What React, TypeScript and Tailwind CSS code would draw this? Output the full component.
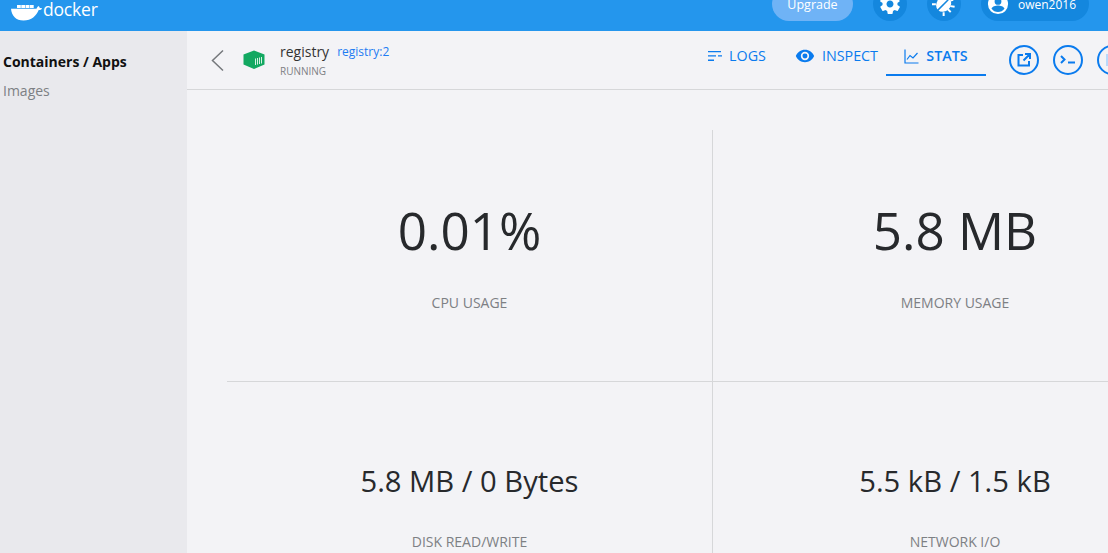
const stats = [
  { value: "0.01%", label: "CPU USAGE", big: true },
  { value: "5.8 MB", label: "MEMORY USAGE", big: true },
  { value: "5.8 MB / 0 Bytes", label: "DISK READ/WRITE", big: false },
  { value: "5.5 kB / 1.5 kB", label: "NETWORK I/O", big: false },
];

function DockerLogo() {
  return (
    <svg width="31" height="16" viewBox="0 0 31 16" fill="#fff">
      <path d="M6 0h3.800v3H6zM10.300 0h3.800v3h-3.800zM14.600 0h3.800v3h-3.800zM18.900 0h3.800v3h-3.800z" />
      <path d="M0 3.800h25.500c.3-1.100 1.200-2.300 2-2.800.8.500 1.300 1.300 1.400 2.200.7-.2 1.500-.1 2.100.3-.6 1.100-1.800 1.500-3.300 1.500C25.500 10.800 20.500 15.500 12.500 15.500 5 15.500.6 11 0 3.800z" />
    </svg>
  );
}

function TopCircle({ children }: { children: React.ReactNode }) {
  return <div className="flex h-[34px] w-[34px] items-center justify-center rounded-full bg-[#1487de]">{children}</div>;
}

function Header() {
  return (
    <header className="flex h-[31px] shrink-0 items-end overflow-hidden bg-[#2496ed] pb-[10px] text-white">
      <div className="ml-[11px] flex items-end">
        <DockerLogo />
        <span className="mb-[1px] ml-[1px] text-[17.500px] leading-[21px] tracking-[-0.2px]">docker</span>
      </div>
      <div className="ml-auto flex items-center">
        <div className="flex h-[34px] w-[81px] items-center justify-center rounded-full bg-[#6fb3f6] pt-[2px] text-[12.500px]">Upgrade</div>
        <div className="ml-[20px]">
          <TopCircle>
            <svg width="24" height="24" viewBox="0 0 24 24" fill="#fff">
              <path d="M19.400 13c.1-.3.100-.7.100-1s0-.7-.1-1l2.100-1.600c.2-.2.200-.4.100-.6l-2-3.500c-.1-.2-.4-.3-.6-.2l-2.500 1c-.5-.4-1.100-.7-1.700-1l-.4-2.600c0-.3-.2-.5-.5-.5h-4c-.3 0-.5.200-.5.500l-.4 2.600c-.6.300-1.200.6-1.700 1l-2.500-1c-.2-.1-.5 0-.6.200l-2 3.500c-.1.200-.1.400.1.600L4.600 11c-.1.300-.1.700-.1 1s0 .7.100 1l-2.100 1.600c-.2.200-.2.400-.1.600l2 3.500c.1.200.4.300.6.200l2.500-1c.5.400 1.100.7 1.700 1l.4 2.600c0 .3.200.5.500.5h4c.3 0 .5-.2.500-.5l.4-2.600c.6-.3 1.200-.6 1.700-1l2.500 1c.2.100.5 0 .6-.2l2-3.500c.1-.2.100-.4-.1-.6L19.400 13zM12 15.500c-1.900 0-3.500-1.600-3.500-3.500s1.600-3.500 3.500-3.500 3.500 1.600 3.500 3.500-1.600 3.500-3.500 3.500z" />
            </svg>
          </TopCircle>
        </div>
        <div className="ml-[20px]">
          <TopCircle>
            <svg width="24" height="24" viewBox="0 0 24 24" fill="#fff">
              <g transform="rotate(45 12 12)">
                <ellipse cx="12" cy="12.500" rx="7" ry="8" />
                <path d="M6 9L2.500 6.500M18 9l3.500-2.500M5.500 13H1.500M18.500 13h4M6.500 18l-3 3M17.500 18l3 3M10 5L8.500 2.500M14 5l1.500-2.500" stroke="#fff" strokeWidth="2" fill="none" />
                <path d="M12 6v15" stroke="#1487de" strokeWidth="1.500" />
              </g>
            </svg>
          </TopCircle>
        </div>
        <div className="ml-[20px] mr-[19px] flex h-[34px] w-[108px] items-center rounded-full bg-[#1487de] pl-[6px]">
          <svg width="22" height="22" viewBox="0 0 24 24" fill="#fff">
            <path d="M12 1a11 11 0 100 22 11 11 0 000-22zm0 4.500a3.700 3.700 0 110 7.400 3.700 3.700 0 010-7.400zm0 15.300c-2.900 0-5.500-1.400-7-3.600 0-2.300 4.700-3.600 7-3.600s7 1.300 7 3.600c-1.500 2.200-4.100 3.600-7 3.600z" />
          </svg>
          <span className="ml-[9px] pt-[2px] text-[12px]">owen2016</span>
        </div>
      </div>
    </header>
  );
}

function Sidebar() {
  return (
    <aside className="w-[187px] shrink-0 bg-[#e9e9ed] pl-[3px] pt-[20px] text-[14px]">
      <div className="font-bold leading-[22px] text-[#111]">Containers / Apps</div>
      <div className="mt-[7px] leading-[22px] text-[#7d8084]">Images</div>
    </aside>
  );
}

function Tab({ icon, label, active }: { icon: React.ReactNode; label: string; active?: boolean }) {
  return (
    <div className={`flex h-[38px] items-center justify-center gap-[7px] border-b-2 text-[14.300px] text-[#0a7bee] ${active ? "border-[#0a7bee] font-semibold" : "border-transparent font-medium"}`}>
      {icon}
      <span>{label}</span>
    </div>
  );
}

function RoundAction({ children }: { children: React.ReactNode }) {
  return <div className="flex h-[30px] w-[30px] shrink-0 items-center justify-center rounded-full border-2 border-[#0a7bee]">{children}</div>;
}

function SubHeader() {
  return (
    <div className="flex h-[59px] shrink-0 items-start overflow-hidden border-b border-[#d6d7d9]">
      <svg className="ml-[23px] mt-[17px] shrink-0" width="16" height="24" viewBox="0 0 16 24" fill="none" stroke="#75787c" strokeWidth="1.500">
        <path d="M13 2.500L2.500 12.500 13 22.500" />
      </svg>
      <svg className="ml-[17px] mt-[19px] shrink-0" width="22" height="20" viewBox="0 0 22 20">
        <path d="M11 0.500L21.500 4.500V14.500L11 19 .5 14.500V4.500z" fill="#12a861" />
        <path d="M12 8.500h1v6.500h-1zM14 8h1v6.500h-1zM16 7.500h1v6.500h-1zM18 7h1v6.500h-1z" fill="#d5f0e2" />
      </svg>
      <div className="ml-[15px] mt-[10px] w-[110px] shrink-0">
        <div className="flex items-center whitespace-nowrap">
          <span className="text-[14px] leading-[22px] text-[#333]">registry</span>
          <span className="ml-[8px] text-[12px] leading-[22px] text-[#1d7cf2]">registry:2</span>
        </div>
        <div className="mt-[1px] text-[10px] leading-[14px] text-[#7d8084]">RUNNING</div>
      </div>
      <div className="ml-[318px] mt-[7px] flex shrink-0 items-start">
        <div className="w-[58px] shrink-0">
          <Tab
            label="LOGS"
            icon={
              <svg width="14" height="12" viewBox="0 0 14 12" fill="#0a7bee">
                <path d="M0 1h13v1.300H0zM0 5.300h8v1.300H0zM10 5.300h4v1.300h-4zM0 9.600h6v1.300H0z" />
              </svg>
            }
          />
        </div>
        <div className="ml-[29px] w-[83px] shrink-0">
          <Tab
            label="INSPECT"
            icon={
              <svg width="20" height="20" viewBox="0 0 24 24" fill="#0a7bee">
                <path d="M12 4.500C7 4.500 2.700 7.600 1 12c1.700 4.400 6 7.500 11 7.500s9.300-3.100 11-7.500c-1.700-4.400-6-7.500-11-7.500zM12 17a5 5 0 110-10 5 5 0 010 10zm0-8a3 3 0 100 6 3 3 0 000-6z" />
              </svg>
            }
          />
        </div>
        <div className="ml-[8px] mr-[23px] w-[100px] shrink-0">
          <Tab
            active
            label="STATS"
            icon={
              <svg width="15" height="15" viewBox="0 0 15 15" fill="none" stroke="#0a7bee" strokeWidth="1.200">
                <path d="M1 .5V14h13.500M3 10.500l3-4 3 2.500 4.500-5" />
              </svg>
            }
          />
        </div>
      </div>
      <div className="mt-[14px] flex shrink-0 gap-[14px]">
        <RoundAction>
          <svg width="16" height="16" viewBox="0 0 16 16" fill="none" stroke="#0a7bee" strokeWidth="2">
            <path d="M7 3H2.500v10.500H13V9M9 2h5v5M14 2L7.500 8.500" />
          </svg>
        </RoundAction>
        <RoundAction>
          <svg width="16" height="12" viewBox="0 0 16 12" fill="none" stroke="#0a7bee" strokeWidth="2">
            <path d="M1 2l3.500 3.500L1 9M8 8.500h7" />
          </svg>
        </RoundAction>
        <RoundAction>
          <div className="h-[12px] w-[12px] bg-[#b9d9fb]" />
        </RoundAction>
      </div>
    </div>
  );
}

function Stats() {
  return (
    <div className="ml-[40px] mt-[40px] grid w-[970px] shrink-0 grid-cols-[486px_484px] grid-rows-[252px_252px]">
      {stats.map((s, i) => (
        <div
          key={s.label}
          className={`flex flex-col items-center ${i % 2 === 0 ? "border-r border-[#d6d7d9]" : ""} ${i < 2 ? "border-b border-[#d6d7d9]" : ""}`}
        >
          <div className={s.big ? "mt-[65px] text-[51.200px] leading-[70px] text-[#27292c]" : "mt-[81px] text-[29.200px] leading-[36px] text-[#27292c]"}>{s.value}</div>
          <div className={s.big ? "mt-[28px] text-[14px] leading-[20px] text-[#7d8084]" : "mt-[33px] text-[14px] leading-[20px] text-[#7d8084]"}>{s.label}</div>
        </div>
      ))}
    </div>
  );
}

export default function App() {
  return (
    <div className="flex h-[553px] w-[1108px] flex-col overflow-hidden bg-[#f3f3f6] font-['Open_Sans',sans-serif]">
      <Header />
      <div className="flex min-h-0 flex-1">
        <Sidebar />
        <main className="flex min-w-0 flex-1 flex-col overflow-hidden">
          <SubHeader />
          <Stats />
        </main>
      </div>
    </div>
  );
}
